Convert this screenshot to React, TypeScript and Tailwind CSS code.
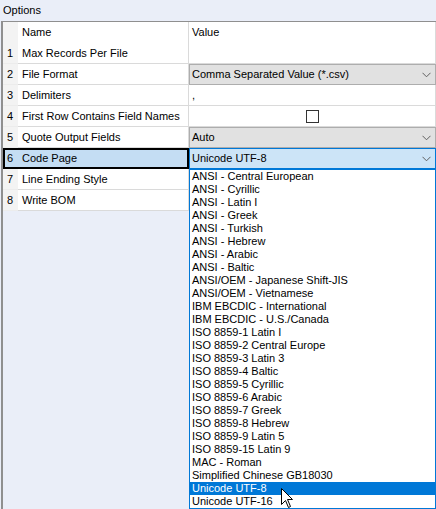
import React from 'react';

type Row = { n: number; name: string; kind: 'text' | 'combo' | 'check'; value?: string };

const rows: Row[] = [
  { n: 1, name: 'Max Records Per File', kind: 'text', value: '' },
  { n: 2, name: 'File Format', kind: 'combo', value: 'Comma Separated Value (*.csv)' },
  { n: 3, name: 'Delimiters', kind: 'text', value: ',' },
  { n: 4, name: 'First Row Contains Field Names', kind: 'check' },
  { n: 5, name: 'Quote Output Fields', kind: 'combo', value: 'Auto' },
  { n: 6, name: 'Code Page', kind: 'combo', value: 'Unicode UTF-8' },
  { n: 7, name: 'Line Ending Style', kind: 'text', value: '' },
  { n: 8, name: 'Write BOM', kind: 'text', value: '' },
];

const codePages = [
  'ANSI - Central European',
  'ANSI - Cyrillic',
  'ANSI - Latin I',
  'ANSI - Greek',
  'ANSI - Turkish',
  'ANSI - Hebrew',
  'ANSI - Arabic',
  'ANSI - Baltic',
  'ANSI/OEM - Japanese Shift-JIS',
  'ANSI/OEM - Vietnamese',
  'IBM EBCDIC - International',
  'IBM EBCDIC - U.S./Canada',
  'ISO 8859-1 Latin I',
  'ISO 8859-2 Central Europe',
  'ISO 8859-3 Latin 3',
  'ISO 8859-4 Baltic',
  'ISO 8859-5 Cyrillic',
  'ISO 8859-6 Arabic',
  'ISO 8859-7 Greek',
  'ISO 8859-8 Hebrew',
  'ISO 8859-9 Latin 5',
  'ISO 8859-15 Latin 9',
  'MAC - Roman',
  'Simplified Chinese GB18030',
  'Unicode UTF-8',
  'Unicode UTF-16',
];

const Chevron = () => (
  <svg width="9" height="6" viewBox="0 0 9 6" className="mr-[4px] shrink-0">
    <path d="M0.5 0.8 L4.5 4.8 L8.5 0.8" fill="none" stroke="#606060" strokeWidth="1" />
  </svg>
);

const ValueCell = ({ row, selected }: { row: Row; selected: boolean }) => {
  if (row.kind === 'combo') {
    return (
      <div
        className={`w-[247px] h-[21px] flex items-center justify-between border ${
          selected ? 'border-[#0078d7] bg-[#cce4f7]' : 'border-[#adadad] bg-[#e1e1e1]'
        }`}
      >
        <span className="pl-[2px]">{row.value}</span>
        <Chevron />
      </div>
    );
  }
  if (row.kind === 'check') {
    return (
      <div className="w-[247px] h-[21px] flex items-center justify-center border-b border-r border-[#dadada] bg-white">
        <div className="w-[13px] h-[13px] border border-[#333] bg-white" />
      </div>
    );
  }
  return (
    <div className="w-[247px] h-[21px] flex items-center border-b border-r border-[#dadada] bg-white pl-[3px]">
      {row.value}
    </div>
  );
};

export default function App() {
  return (
    <div
      className="w-[436px] h-[509px] bg-[#eaeef8] flex flex-col text-[11px] text-black overflow-hidden"
      style={{ fontFamily: '"Liberation Sans", Arial, sans-serif' }}
    >
      {/* Options caption */}
      <div className="h-[21px] flex items-center pl-[3px] shrink-0">Options</div>

      {/* Grid */}
      <div className="relative flex-1 ml-[1px] border-t border-l-2 border-[#8f8f8f]">
        {/* header */}
        <div className="flex h-[21px]">
          <div className="w-[15px] bg-[#f3f3f3]" />
          <div className="w-[171px] flex items-center pl-[4px] bg-white border-r border-[#dadada]">Name</div>
          <div className="w-[247px] flex items-center pl-[3px] bg-white border-r border-[#dadada]">Value</div>
        </div>

        {rows.map((row) => {
          const selected = row.n === 6;
          return (
            <div key={row.n} className="flex h-[21px]">
              {selected ? (
                <div className="w-[186px] h-[21px] flex items-center border-2 border-black bg-[#c4ddf3]">
                  <span className="w-[13px] pl-[2px]">{row.n}</span>
                  <span className="pl-[4px]">{row.name}</span>
                </div>
              ) : (
                <>
                  <div className="w-[15px] h-[21px] flex items-center pl-[4px] bg-[#f3f3f3] border-b border-[#ececec]">
                    {row.n}
                  </div>
                  <div className="w-[171px] h-[21px] flex items-center pl-[4px] bg-white border-b border-r border-[#dadada] whitespace-nowrap">
                    {row.name}
                  </div>
                </>
              )}
              <ValueCell row={row} selected={selected} />
            </div>
          );
        })}

        {/* open drop-down list */}
        <div className="absolute left-[186px] top-[147px] w-[247px] border border-[#0078d7] bg-white flex flex-col">
          {codePages.map((cp) => {
            const active = cp === 'Unicode UTF-8';
            return (
              <div
                key={cp}
                className={`h-[13px] leading-[13px] pl-[2px] whitespace-nowrap ${
                  active ? 'bg-[#0078d7] text-white' : ''
                }`}
              >
                {cp}
              </div>
            );
          })}
        </div>

        {/* mouse pointer */}
        <svg
          className="absolute left-[278px] top-[466px]"
          width="13"
          height="21"
          viewBox="0 0 13 21"
        >
          <path
            d="M0.5 0.5 L0.5 16.5 L4.5 12.5 L7.5 19.5 L9.5 18.5 L6.5 11.5 L11.5 11.5 Z"
            fill="white"
            stroke="black"
            strokeWidth="1"
            strokeLinejoin="miter"
          />
        </svg>
      </div>
    </div>
  );
}
